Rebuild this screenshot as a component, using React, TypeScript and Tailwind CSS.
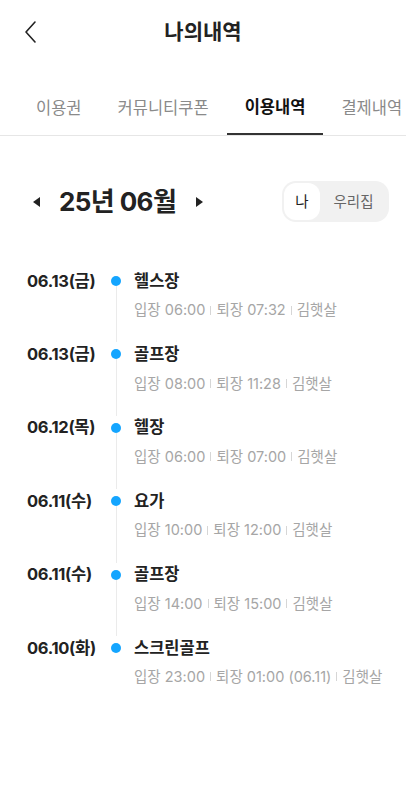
import React from 'react';

const font = { fontFamily: "Inter, 'Noto Sans CJK KR', sans-serif" };

const tabs = ['이용권', '커뮤니티쿠폰', '이용내역', '결제내역'];

const records = [
  { date: '06.13(금)', place: '헬스장', inTime: '06:00', outTime: '07:32', name: '김햇살' },
  { date: '06.13(금)', place: '골프장', inTime: '08:00', outTime: '11:28', name: '김햇살' },
  { date: '06.12(목)', place: '헬장', inTime: '06:00', outTime: '07:00', name: '김햇살' },
  { date: '06.11(수)', place: '요가', inTime: '10:00', outTime: '12:00', name: '김햇살' },
  { date: '06.11(수)', place: '골프장', inTime: '14:00', outTime: '15:00', name: '김햇살' },
  { date: '06.10(화)', place: '스크린골프', inTime: '23:00', outTime: '01:00 (06.11)', name: '김햇살' },
];

function Sep() {
  return <span className="inline-block w-px h-[9px] bg-[#d6d6d6] mx-[5px] align-middle" />;
}

export default function App() {
  return (
    <div className="w-[406px] min-h-[790px] bg-white text-[#222]" style={font}>
      {/* Header */}
      <div className="h-16 flex items-center">
        <button className="w-[60px] h-16 flex items-center pl-[22px]">
          <svg width="18" height="24" viewBox="0 0 18 24" fill="none">
            <path d="M13 2 L4 12 L13 22" stroke="#222" strokeWidth="1.6" strokeLinecap="round" strokeLinejoin="round" />
          </svg>
        </button>
        <h1 className="flex-1 text-center text-[21px] font-bold">나의내역</h1>
        <div className="w-[60px]" />
      </div>

      {/* Tabs */}
      <div className="mt-[18px] flex pl-[18px] whitespace-nowrap overflow-hidden border-b border-[#e6e6e6]">
        {tabs.map(t => (
          <div
            key={t}
            className={
              t === '이용내역'
                ? 'h-[53px] px-[18px] flex items-center shrink-0 text-[16.5px] font-bold text-[#111] border-b-2 border-[#333] mb-[-1px]'
                : 'h-[53px] px-[18px] flex items-center shrink-0 text-[16.5px] text-[#8a8a8a]'
            }
          >
            {t}
          </div>
        ))}
      </div>

      {/* Month selector */}
      <div className="mt-[45px] flex items-center justify-between pl-[33px] pr-[17px]">
        <div className="flex items-center">
          <svg width="7" height="10" viewBox="0 0 7 10">
            <path d="M7 0 L0 5 L7 10 Z" fill="#222" />
          </svg>
          <span className="ml-[19px] text-[26px] font-bold tracking-[-0.6px]">25년 06월</span>
          <svg width="7" height="10" viewBox="0 0 7 10" className="ml-[20px]">
            <path d="M0 0 L7 5 L0 10 Z" fill="#222" />
          </svg>
        </div>
        <div className="h-[41px] w-[107px] rounded-[14px] bg-[#f1f1f1] p-[2px] flex items-center">
          <div className="h-[37px] w-[36px] rounded-[12px] bg-white flex items-center justify-center text-[14.5px] text-[#222]">
            나
          </div>
          <div className="flex-1 text-center text-[14.5px] text-[#666]">우리집</div>
        </div>
      </div>

      {/* Timeline */}
      <div className="mt-[47px] pl-[27px]">
        {records.map((r, i) => (
          <div key={i} className="flex h-[73.4px]">
            <div className="w-[84px] h-6 flex items-center text-[16.5px] font-bold tracking-[-0.3px]">{r.date}</div>
            <div className="w-[10px] flex flex-col items-center">
              <div className="h-6 flex items-center">
                <div className="w-[10px] h-[10px] rounded-full bg-[#14a5ff]" />
              </div>
              {i < records.length - 1 && <div className="w-px flex-1 bg-[#ebebeb] -mt-[7px]" />}
            </div>
            <div className="ml-[13px]">
              <div className="h-6 flex items-center text-[16.5px] font-bold">{r.place}</div>
              <div className="mt-[7px] h-5 flex items-center text-[14.5px] text-[#a6a6a6]">
                <span>입장 {r.inTime}</span>
                <Sep />
                <span>퇴장 {r.outTime}</span>
                <Sep />
                <span>{r.name}</span>
              </div>
            </div>
          </div>
        ))}
      </div>
    </div>
  );
}
